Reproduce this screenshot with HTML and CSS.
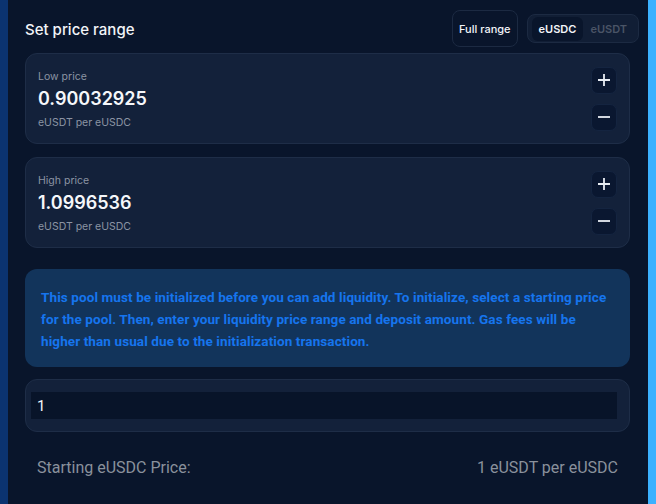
FILE: index.html
```html
<!DOCTYPE html>
<html lang="en">
<head>
    <meta charset="UTF-8">
    <meta name="viewport" content="width=device-width, initial-scale=1.0">
    <title>Set price range</title>
    <link rel="stylesheet" href="styles.css">
</head>
<body>
    <div class="frame">
        <div class="edge-left"></div>

        <div class="panel">
            <div class="head">
                <h2>Set price range</h2>
                <div class="head-actions">
                    <button class="full-range">Full range</button>
                    <div class="toggle">
                        <span class="toggle-item active">eUSDC</span>
                        <span class="toggle-item">eUSDT</span>
                    </div>
                </div>
            </div>

            <div class="price-card">
                <div class="price-info">
                    <div class="price-label">Low price</div>
                    <div class="price-value">0.90032925</div>
                    <div class="price-unit">eUSDT per eUSDC</div>
                </div>
                <div class="steppers">
                    <button class="step">
                        <svg width="14" height="14" viewBox="0 0 14 14"><path d="M7 1v12M1 7h12" stroke="#e8ecf2" stroke-width="1.8"/></svg>
                    </button>
                    <button class="step">
                        <svg width="14" height="14" viewBox="0 0 14 14"><path d="M1 7h12" stroke="#e8ecf2" stroke-width="1.8"/></svg>
                    </button>
                </div>
            </div>

            <div class="price-card">
                <div class="price-info">
                    <div class="price-label">High price</div>
                    <div class="price-value">1.0996536</div>
                    <div class="price-unit">eUSDT per eUSDC</div>
                </div>
                <div class="steppers">
                    <button class="step">
                        <svg width="14" height="14" viewBox="0 0 14 14"><path d="M7 1v12M1 7h12" stroke="#e8ecf2" stroke-width="1.8"/></svg>
                    </button>
                    <button class="step">
                        <svg width="14" height="14" viewBox="0 0 14 14"><path d="M1 7h12" stroke="#e8ecf2" stroke-width="1.8"/></svg>
                    </button>
                </div>
            </div>

            <div class="notice">
                This pool must be initialized before you can add liquidity. To initialize, select a starting price for the pool. Then, enter your liquidity price range and deposit amount. Gas fees will be higher than usual due to the initialization transaction.
            </div>

            <div class="start-box">
                <input type="text" class="start-input" value="1">
            </div>

            <div class="start-row">
                <span>Starting eUSDC Price:</span>
                <span>1 eUSDT per eUSDC</span>
            </div>
        </div>

        <div class="edge-right"></div>
    </div>
</body>
</html>
```

FILE: styles.css
```css
body {
    margin: 0;
    padding: 0;
    background-color: #09152b;
    font-family: Inter, "Noto Sans", sans-serif;
    color: #fff;
}
.frame {
    display: flex;
    width: 656px;
    height: 504px;
    overflow: hidden;
}
.edge-left {
    width: 8px;
    background-color: #0b3370;
}
.edge-right {
    width: 8px;
    background-color: #3bb1ff;
}
.panel {
    flex: 1;
    background-color: #09152b;
    padding: 10px 18px 0 17px;
}
.head {
    display: flex;
    justify-content: space-between;
    align-items: center;
    height: 37px;
    margin-bottom: 6px;
}
.head h2 {
    margin: 0;
    padding-top: 2px;
    font-size: 15px;
    font-weight: 500;
    color: #f2f4f8;
}
.head-actions {
    display: flex;
    align-items: center;
    gap: 9px;
    margin-right: -9px;
}
.full-range {
    height: 37px;
    padding: 0 6px;
    background-color: #09152b;
    border: 1px solid #1c2a42;
    border-radius: 8px;
    color: #f2f4f8;
    font-family: inherit;
    font-size: 11px;
    font-weight: 500;
}
.toggle {
    display: flex;
    align-items: center;
    height: 29px;
    padding: 0 4px;
    background-color: #111e35;
    border: 1px solid #1c2a42;
    border-radius: 8px;
    box-sizing: border-box;
}
.toggle-item {
    padding: 5px 7px;
    font-size: 11px;
    font-weight: 600;
    color: #4a5466;
    border-radius: 6px;
}
.toggle-item.active {
    background-color: #09152b;
    color: #f2f4f8;
}
.price-card {
    display: flex;
    justify-content: space-between;
    align-items: center;
    height: 91px;
    box-sizing: border-box;
    padding: 0 12px 0 12px;
    margin-bottom: 13px;
    background-color: #13213a;
    border: 1px solid #1e2d47;
    border-radius: 12px;
}
.price-info {
    padding-top: 1px;
}
.price-label {
    font-size: 10.5px;
    color: #8b94a3;
    margin-bottom: 5px;
}
.price-value {
    font-size: 18px;
    font-weight: 600;
    color: #f5f7fa;
    margin-bottom: 7px;
}
.price-unit {
    font-size: 10.5px;
    color: #8b94a3;
}
.steppers {
    display: flex;
    flex-direction: column;
    gap: 10px;
}
.step {
    width: 26px;
    height: 27px;
    padding: 0;
    display: flex;
    align-items: center;
    justify-content: center;
    background-color: #0a1730;
    border: 1px solid #142440;
    border-radius: 7px;
}
.notice {
    margin-top: 21px;
    padding: 17px 16px 15px 16px;
    background-color: #12345b;
    border-radius: 12px;
    color: #1675ee;
    font-family: Roboto, sans-serif;
    font-size: 13.5px;
    font-weight: 700;
    line-height: 22px;
    letter-spacing: 0.1px;
}
.start-box {
    margin-top: 12px;
    padding: 12px 12px 12px 5px;
    background-color: #13213a;
    border: 1px solid #1e2d47;
    border-radius: 12px;
}
.start-input {
    display: block;
    width: 100%;
    height: 27px;
    box-sizing: border-box;
    padding: 0 6px;
    background-color: #081429;
    border: none;
    color: #f5f7fa;
    font-family: Roboto, sans-serif;
    font-size: 15px;
    outline: none;
}
.start-row {
    display: flex;
    justify-content: space-between;
    padding: 26px 12px 0 12px;
    font-family: Roboto, sans-serif;
    font-size: 16px;
    color: #8a919c;
}
```
